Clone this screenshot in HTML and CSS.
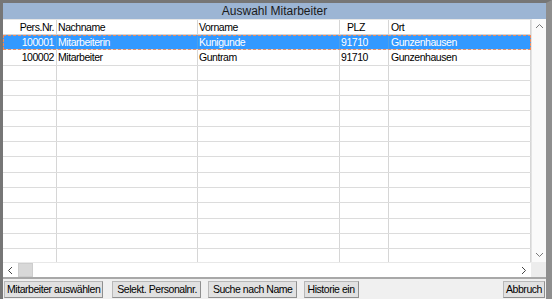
FILE: index.html
```html
<!DOCTYPE html>
<html lang="de">
<head>
<meta charset="utf-8">
<title>Auswahl Mitarbeiter</title>
<link rel="stylesheet" href="styles.css">
</head>
<body>
<div class="window">
  <div class="title">Auswahl Mitarbeiter</div>
  <div class="grid-area">
    <div class="list">
      <div class="row head">
        <div class="c c1">Pers.Nr.</div>
        <div class="c c2">Nachname</div>
        <div class="c c3">Vorname</div>
        <div class="c c4 plz">PLZ</div>
        <div class="c c5">Ort</div>
      </div>
      <div class="row sel">
        <div class="c c1">100001</div>
        <div class="c c2">Mitarbeiterin</div>
        <div class="c c3">Kunigunde</div>
        <div class="c c4">91710</div>
        <div class="c c5">Gunzenhausen</div>
      </div>
      <div class="row">
        <div class="c c1">100002</div>
        <div class="c c2">Mitarbeiter</div>
        <div class="c c3">Guntram</div>
        <div class="c c4">91710</div>
        <div class="c c5">Gunzenhausen</div>
      </div>
      <div class="row"><div class="c c1"></div><div class="c c2"></div><div class="c c3"></div><div class="c c4"></div><div class="c c5"></div></div>
      <div class="row"><div class="c c1"></div><div class="c c2"></div><div class="c c3"></div><div class="c c4"></div><div class="c c5"></div></div>
      <div class="row"><div class="c c1"></div><div class="c c2"></div><div class="c c3"></div><div class="c c4"></div><div class="c c5"></div></div>
      <div class="row"><div class="c c1"></div><div class="c c2"></div><div class="c c3"></div><div class="c c4"></div><div class="c c5"></div></div>
      <div class="row"><div class="c c1"></div><div class="c c2"></div><div class="c c3"></div><div class="c c4"></div><div class="c c5"></div></div>
      <div class="row"><div class="c c1"></div><div class="c c2"></div><div class="c c3"></div><div class="c c4"></div><div class="c c5"></div></div>
      <div class="row"><div class="c c1"></div><div class="c c2"></div><div class="c c3"></div><div class="c c4"></div><div class="c c5"></div></div>
      <div class="row"><div class="c c1"></div><div class="c c2"></div><div class="c c3"></div><div class="c c4"></div><div class="c c5"></div></div>
      <div class="row"><div class="c c1"></div><div class="c c2"></div><div class="c c3"></div><div class="c c4"></div><div class="c c5"></div></div>
      <div class="row"><div class="c c1"></div><div class="c c2"></div><div class="c c3"></div><div class="c c4"></div><div class="c c5"></div></div>
      <div class="row"><div class="c c1"></div><div class="c c2"></div><div class="c c3"></div><div class="c c4"></div><div class="c c5"></div></div>
      <div class="row"><div class="c c1"></div><div class="c c2"></div><div class="c c3"></div><div class="c c4"></div><div class="c c5"></div></div>
      <div class="row"><div class="c c1"></div><div class="c c2"></div><div class="c c3"></div><div class="c c4"></div><div class="c c5"></div></div>
      <div class="row"><div class="c c1"></div><div class="c c2"></div><div class="c c3"></div><div class="c c4"></div><div class="c c5"></div></div>
    </div>
    <div class="vscroll">
      <svg class="arrow" width="15" height="15" viewBox="0 0 15 15"><path d="M4 9 L7.5 5.5 L11 9" fill="none" stroke="#7a7a7a" stroke-width="1"/></svg>
      <div class="track"></div>
      <svg class="arrow" width="15" height="15" viewBox="0 0 15 15"><path d="M4 6 L7.5 9.5 L11 6" fill="none" stroke="#7a7a7a" stroke-width="1"/></svg>
    </div>
    <div class="hscroll">
      <svg class="arrow" width="15" height="15" viewBox="0 0 15 15"><path d="M9 4 L5.5 7.5 L9 11" fill="none" stroke="#444" stroke-width="1"/></svg>
      <div class="thumb"></div>
      <div class="htrack"></div>
      <svg class="arrow" width="15" height="15" viewBox="0 0 15 15"><path d="M6 4 L9.5 7.5 L6 11" fill="none" stroke="#444" stroke-width="1"/></svg>
    </div>
    <div class="corner"></div>
  </div>
  <div class="buttons">
    <div class="btn b1">Mitarbeiter auswählen</div>
    <div class="btn b2">Selekt. Personalnr.</div>
    <div class="btn b3">Suche nach Name</div>
    <div class="btn b4">Historie ein</div>
    <div class="spacer"></div>
    <div class="btn b5">Abbruch</div>
  </div>
</div>
</body>
</html>
```
FILE: styles.css
```css
html, body {
  margin: 0;
  padding: 0;
  background: #f0f0f0;
}
.window {
  width: 552px;
  height: 299px;
  box-sizing: border-box;
  border-left: 3px solid #767676;
  border-top: 3px solid #767676;
  border-right: 6px solid #8e8e8e;
  display: flex;
  flex-direction: column;
  font-family: "Liberation Sans", Arial, sans-serif;
  font-size: 10.5px;
  letter-spacing: -0.45px;
  color: #000;
  overflow: hidden;
}
.title {
  height: 16px;
  flex: none;
  background: #9cb5d4;
  color: #1a1a1a;
  font-size: 12px;
  letter-spacing: 0;
  line-height: 17px;
  text-align: center;
}
.grid-area {
  flex: none;
  height: 258px;
  display: grid;
  grid-template-columns: 528px 15px;
  grid-template-rows: 243px 15px;
  background: #fff;
}
.list {
  overflow: hidden;
  background: #fff;
}
.row {
  display: grid;
  grid-template-columns: 54px 141px 142px 49px 142px;
  height: 15.3px;
  box-sizing: border-box;
  border-bottom: 1px solid #dcdcdc;
  line-height: 14px;
  white-space: nowrap;
}
.row.head {
  height: 16px;
  border-top: 1px solid #e6e6e6;
  border-bottom: 1px solid #d4d4d4;
  line-height: 15px;
}
.c {
  border-right: 1px solid #d6d6d6;
  overflow: hidden;
  padding-left: 1px;
}
.c1 {
  text-align: right;
  padding: 0 2px 0 0;
}
.c5 {
  padding-left: 2px;
}
.plz {
  padding-left: 7px;
}
.row.sel {
  background: #3399ff;
  color: #fff;
  outline: 1px dashed #f08a5d;
  outline-offset: -1px;
}
.row.sel .c {
  border-right-color: #4d9fe8;
}
.vscroll {
  grid-row: 1;
  grid-column: 2;
  display: flex;
  flex-direction: column;
  background: #fafafa;
  border-left: 1px solid #e4e4e4;
  box-sizing: border-box;
}
.vscroll .arrow {
  flex: none;
  display: block;
}
.track {
  flex: 1;
}
.hscroll {
  grid-row: 2;
  grid-column: 1;
  display: flex;
  background: #fff;
  border-top: 1px solid #e8e8e8;
  box-sizing: border-box;
}
.hscroll .arrow {
  flex: none;
  display: block;
}
.thumb {
  flex: none;
  width: 15px;
  background: #d8d8d8;
  border: 1px solid #cdcdcd;
  box-sizing: border-box;
}
.htrack {
  flex: 1;
}
.corner {
  grid-row: 2;
  grid-column: 2;
  background: #ececec;
}
.buttons {
  flex: 1;
  display: flex;
  align-items: center;
  padding: 0 1px 0 1px;
  background: #f0f0f0;
  border-top: 2px solid #a8a8a8;
}
.btn {
  height: 17px;
  box-sizing: border-box;
  padding: 0 2px;
  background: #e1e1e1;
  border: 1px solid #8f8f8f;
  border-top-color: #b8b8b8;
  border-left-color: #b8b8b8;
  line-height: 15px;
  white-space: nowrap;
}
.b2 {
  margin-left: 9px;
  padding: 0 3px 0 4px;
}
.b3 {
  margin-left: 7px;
  padding: 0 3px 0 4px;
}
.b4 {
  margin-left: 7px;
  padding: 0 3px;
}
.spacer {
  flex: 1;
}
```
